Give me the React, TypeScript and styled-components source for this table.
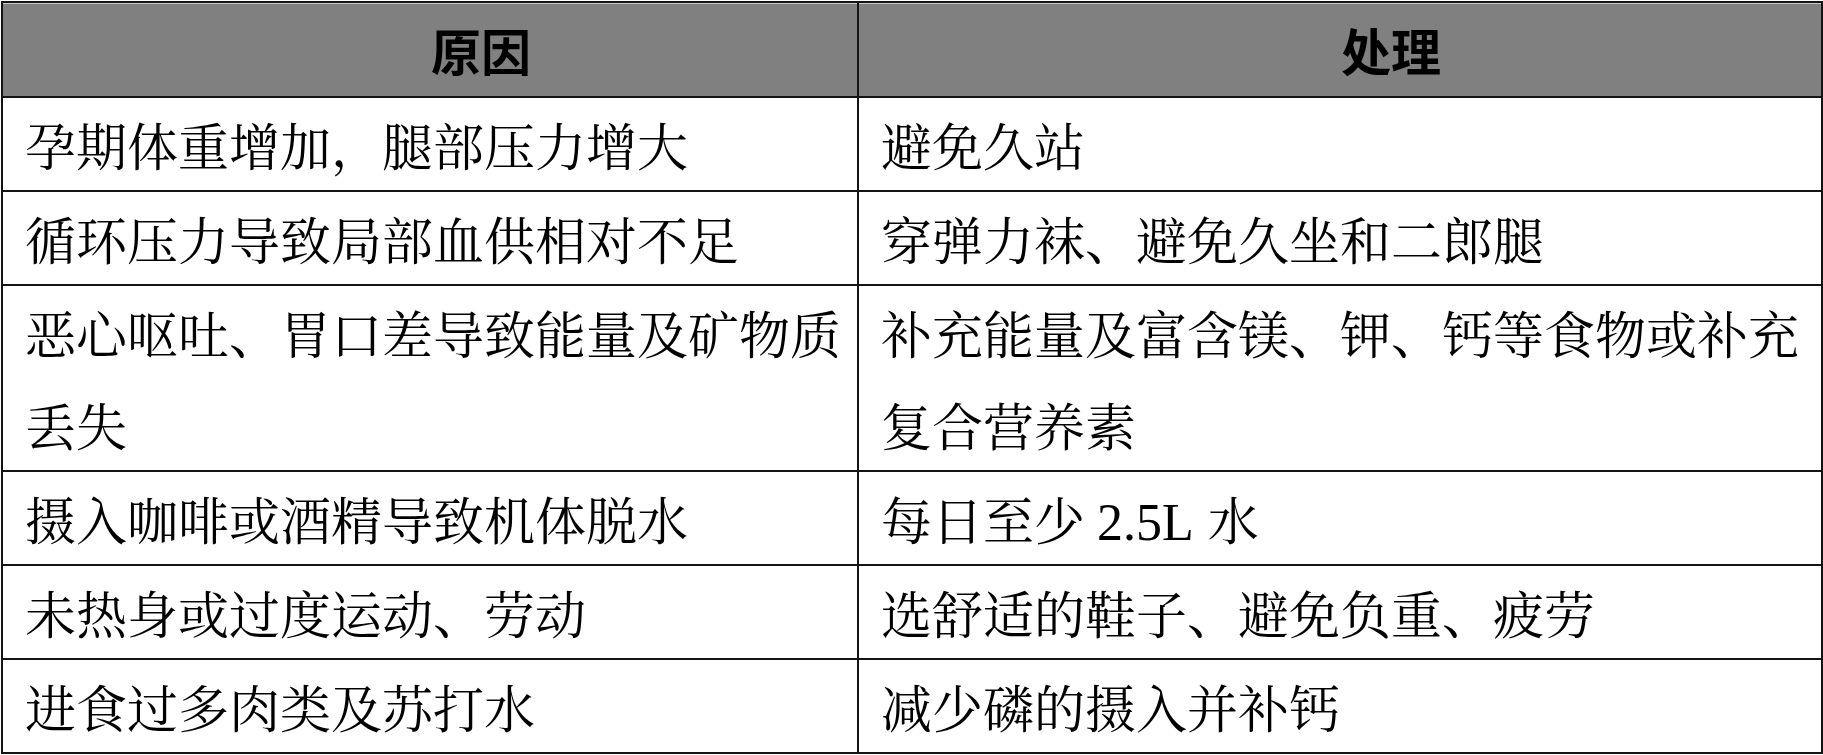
import React from "react";
import styled, { createGlobalStyle } from "styled-components";

const Global = createGlobalStyle`
  html, body { margin: 0; padding: 0; background: #ffffff; }
  body { font-family: "Noto Serif CJK SC", "Noto Sans CJK SC", serif; }
`;

const Table = styled.table`
  border-collapse: collapse;
  width: 1822px;
  table-layout: fixed;
  margin: 1px 0 0 1px;
  font-family: "Noto Serif CJK SC", "Noto Sans CJK SC", serif;
  color: #000;
`;

const HeadCell = styled.th`
  border: 2px solid #141414;
  background: #808080;
  box-shadow: inset 0 1px 0 #c9c9c9;
  height: 93px;
  padding: 0 0 0 102px;
  font-family: "Noto Sans CJK SC", sans-serif;
  font-size: 50px;
  font-weight: 700;
  line-height: 93px;
  text-align: center;
  color: #000;
`;

const Cell = styled.td`
  border: 2px solid #141414;
  padding: 0 4px 0 22px;
  height: 90px;
  font-size: 51px;
  font-weight: 400;
  line-height: 92px;
  text-align: left;
  vertical-align: middle;
  word-break: break-all;
`;

const Num = styled.span`
  font-family: "Liberation Serif", serif;
  font-size: 52px;
  line-height: 1;
  margin: 0 14px 0 12px;
`;

const rows: [React.ReactNode, React.ReactNode][] = [
  ["孕期体重增加，腿部压力增大", "避免久站"],
  ["循环压力导致局部血供相对不足", "穿弹力袜、避免久坐和二郎腿"],
  ["恶心呕吐、胃口差导致能量及矿物质丢失", "补充能量及富含镁、钾、钙等食物或补充复合营养素"],
  [
    "摄入咖啡或酒精导致机体脱水",
    <>
      每日至少<Num>2.5L</Num>水
    </>,
  ],
  ["未热身或过度运动、劳动", "选舒适的鞋子、避免负重、疲劳"],
  ["进食过多肉类及苏打水", "减少磷的摄入并补钙"],
];

export default function App() {
  return (
    <>
      <Global />
      <Table>
        <colgroup>
          <col style={{ width: "856px" }} />
          <col />
        </colgroup>
        <thead>
          <tr>
            <HeadCell>原因</HeadCell>
            <HeadCell>处理</HeadCell>
          </tr>
        </thead>
        <tbody>
          {rows.map(([a, b], i) => (
            <tr key={i}>
              <Cell>{a}</Cell>
              <Cell>{b}</Cell>
            </tr>
          ))}
        </tbody>
      </Table>
    </>
  );
}
